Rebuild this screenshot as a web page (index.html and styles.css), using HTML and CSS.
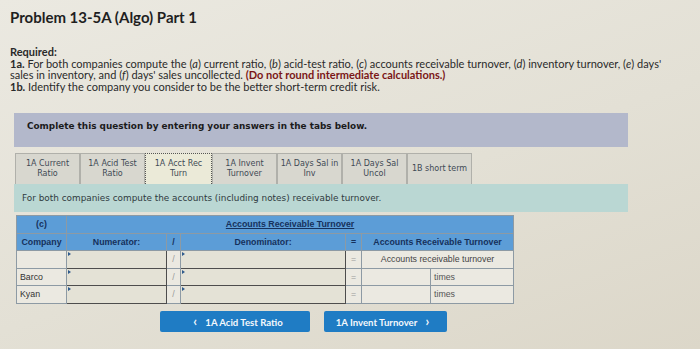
FILE: index.html
```html
<!DOCTYPE html>
<html lang="en">
<head>
    <meta charset="UTF-8">
    <meta name="viewport" content="width=device-width, initial-scale=1.0">
    <title>Problem 13-5A (Algo) Part 1</title>
    <link rel="stylesheet" href="styles.css">
</head>
<body>

    <div class="page">
        <h1 class="title">Problem 13-5A (Algo) Part 1</h1>

        <div class="required">
            <p class="req-label">Required:</p>
            <p><b>1a.</b> For both companies compute the (<i>a</i>) current ratio, (<i>b</i>) acid-test ratio, (<i>c</i>) accounts receivable turnover, (<i>d</i>) inventory turnover, (<i>e</i>) days' sales in inventory, and (<i>f</i>) days' sales uncollected. <span class="warn">(Do not round intermediate calculations.)</span></p>
            <p><b>1b.</b> Identify the company you consider to be the better short-term credit risk.</p>
        </div>

        <div class="question">
            <div class="instructions">Complete this question by entering your answers in the tabs below.</div>

            <div class="tabs">
                <div class="tab">1A Current<br>Ratio</div>
                <div class="tab">1A Acid Test<br>Ratio</div>
                <div class="tab active">1A Acct Rec<br>Turn</div>
                <div class="tab">1A Invent<br>Turnover</div>
                <div class="tab">1A Days Sal in<br>Inv</div>
                <div class="tab">1A Days Sal<br>Uncol</div>
                <div class="tab single">1B short term</div>
            </div>

            <div class="prompt">For both companies compute the accounts (including notes) receivable turnover.</div>

            <table class="ratio">
                <colgroup>
                    <col class="c-company">
                    <col class="c-num">
                    <col class="c-op">
                    <col class="c-den">
                    <col class="c-eq">
                    <col class="c-val">
                    <col class="c-unit">
                </colgroup>
                <tr class="head">
                    <th>(c)</th>
                    <th colspan="6"><span class="underline">Accounts Receivable Turnover</span></th>
                </tr>
                <tr class="head">
                    <th>Company</th>
                    <th>Numerator:</th>
                    <th>/</th>
                    <th>Denominator:</th>
                    <th>=</th>
                    <th colspan="2">Accounts Receivable Turnover</th>
                </tr>
                <tr>
                    <td></td>
                    <td class="input"></td>
                    <td class="op">/</td>
                    <td class="input"></td>
                    <td class="op">=</td>
                    <td colspan="2" class="center">Accounts receivable turnover</td>
                </tr>
                <tr>
                    <td>Barco</td>
                    <td class="input"></td>
                    <td class="op">/</td>
                    <td class="input"></td>
                    <td class="op">=</td>
                    <td></td>
                    <td class="unit">times</td>
                </tr>
                <tr>
                    <td>Kyan</td>
                    <td class="input"></td>
                    <td class="op">/</td>
                    <td class="input"></td>
                    <td class="op">=</td>
                    <td></td>
                    <td class="unit">times</td>
                </tr>
            </table>

            <div class="nav">
                <button class="nav-btn prev"><span class="chev">&lsaquo;</span> 1A Acid Test Ratio</button>
                <button class="nav-btn next">1A Invent Turnover <span class="chev">&rsaquo;</span></button>
            </div>
        </div>
    </div>

</body>
</html>
```

FILE: styles.css
```css
body {
    margin: 0;
    font-family: Lato, "Open Sans", sans-serif;
    color: #2a2a2a;
    background: linear-gradient(160deg, #ebe9e1 0%, #e3e0d5 55%, #dcd7c9 100%);
    height: 349px;
    overflow: hidden;
}

.page {
    padding: 9px 10px 0 10px;
}

.title {
    margin: 0;
    font-size: 15px;
    font-weight: 700;
    color: #1f1f1f;
    line-height: 17px;
}

.required {
    margin-top: 20px;
    width: 665px;
    font-size: 11px;
    line-height: 11.5px;
}

.required p {
    margin: 0;
}

.req-label {
    font-weight: 700;
}

.warn {
    color: #7a1616;
    font-weight: 700;
}

.question {
    width: 614px;
    margin: 21px 0 0 4px;
}

.instructions {
    background-color: #b3b8cb;
    height: 34px;
    line-height: 27px;
    padding-left: 13px;
    font-family: "DejaVu Sans", Verdana, sans-serif;
    font-size: 8.9px;
    font-weight: 700;
    color: #1b1b1b;
}

.tabs {
    display: flex;
    margin-top: 6px;
    padding-left: 1px;
}

.tab {
    width: 65px;
    height: 31px;
    box-sizing: border-box;
    border: 1px solid #b0b0aa;
    border-bottom: none;
    background-color: #d8d7cf;
    font-family: "DejaVu Sans", Verdana, sans-serif;
    font-size: 8px;
    line-height: 10px;
    color: #3f4a55;
    text-align: center;
    padding-top: 5px;
}

.tab.active {
    width: 67px;
    background-color: #ebead8;
    border: 1px dotted #555;
    border-bottom: none;
}

.tab.single {
    padding-top: 10px;
}

.prompt {
    background-color: #bad7d3;
    height: 28px;
    line-height: 29px;
    padding-left: 8px;
    font-family: "DejaVu Sans", Verdana, sans-serif;
    font-size: 8.9px;
    color: #2f3a40;
}

.ratio {
    margin: 3px 0 0 2px;
    width: 497px;
    border-collapse: collapse;
    table-layout: fixed;
    font-family: "Liberation Sans", Arial, sans-serif;
    font-size: 8.8px;
    color: #333;
}

.c-company { width: 50px; }
.c-num { width: 100px; }
.c-op { width: 14px; }
.c-den { width: 165px; }
.c-eq { width: 16px; }
.c-val { width: 69px; }
.c-unit { width: 83px; }

.ratio th,
.ratio td {
    border: 1px solid #8d9aa4;
    height: 16.5px;
    padding: 0 3px;
    white-space: nowrap;
    overflow: hidden;
}

.ratio th {
    background-color: #5c9dd7;
    color: #16315c;
    font-weight: 700;
    text-align: center;
}

.ratio td {
    background-color: #ebe9e1;
    text-align: left;
}

.ratio td.input {
    background-color: #e4e2d6;
    border: 1px solid #4d4d4d;
    position: relative;
}

.ratio td.input::before {
    content: "";
    position: absolute;
    left: 1px;
    top: 1px;
    border-left: 3px solid #2e5a8c;
    border-top: 2px solid transparent;
    border-bottom: 2px solid transparent;
}

.ratio td.op {
    text-align: center;
    color: #999;
}

.ratio td.center {
    text-align: center;
    color: #444;
}

.ratio td.unit {
    color: #555;
}

.underline {
    text-decoration: underline;
}

.nav {
    display: flex;
    gap: 14px;
    margin: 7px 0 0 146px;
}

.nav-btn {
    height: 21px;
    border: none;
    border-radius: 2px;
    background-color: #1f7cc4;
    color: #f4f8fc;
    font-family: Lato, "Open Sans", sans-serif;
    font-size: 9.6px;
    font-weight: 700;
    padding: 0;
    cursor: pointer;
}

.prev {
    width: 150px;
}

.next {
    width: 123px;
}

.chev {
    font-size: 13px;
    margin: 0 6px;
}
```
